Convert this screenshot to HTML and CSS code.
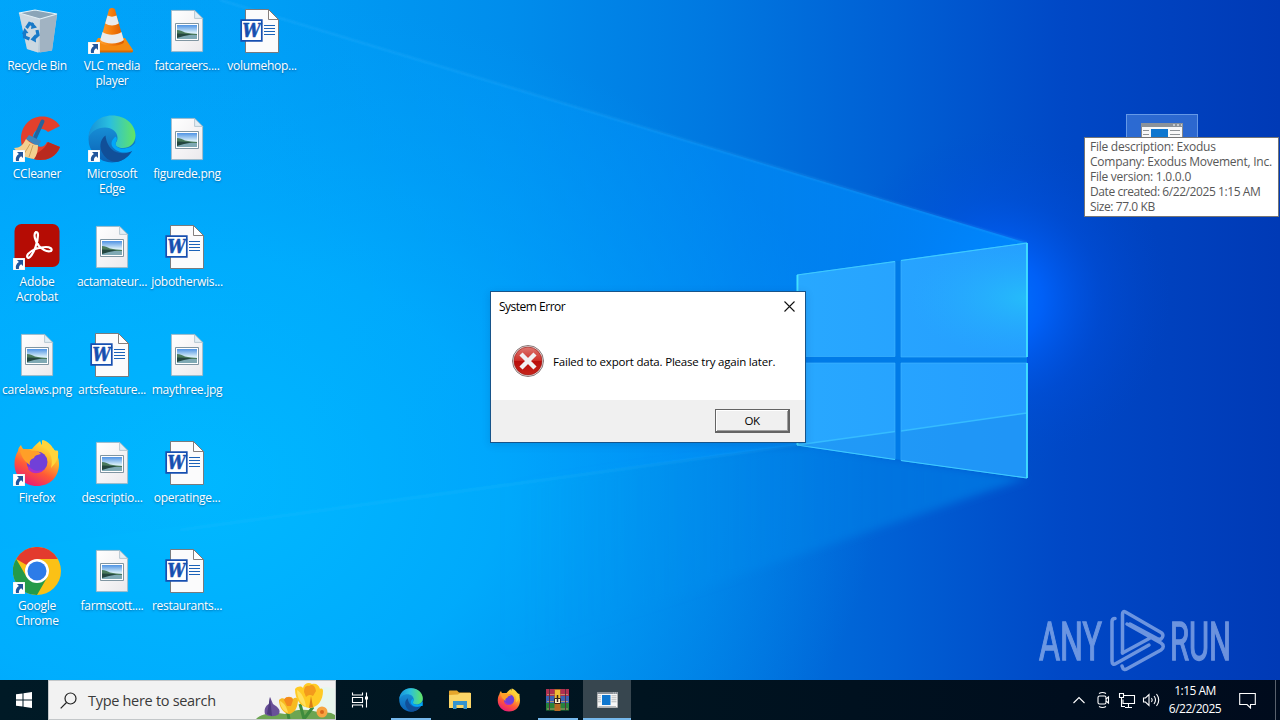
FILE: index.html
```html
<!DOCTYPE html>
<html lang="en">
<head>
    <meta charset="UTF-8">
    <meta name="viewport" content="width=device-width, initial-scale=1.0">
    <title>Desktop</title>
    <link rel="stylesheet" href="styles.css">
</head>
<body>
    <!-- Icons used more than once -->
    <svg class="defs" width="0" height="0" aria-hidden="true">
        <defs>
            <linearGradient id="sky" x1="0" y1="0" x2="0" y2="1">
                <stop offset="0" stop-color="#4f93e4"/>
                <stop offset=".55" stop-color="#d8eef8"/>
                <stop offset="1" stop-color="#a8ccd8"/>
            </linearGradient>
            <linearGradient id="paper" x1="0" y1="0" x2="1" y2="1">
                <stop offset="0" stop-color="#fff"/>
                <stop offset="1" stop-color="#ebe9ec"/>
            </linearGradient>
            <linearGradient id="edgeTop" x1="0" y1="0" x2="1" y2="0">
                <stop offset="0" stop-color="#1691d8"/>
                <stop offset=".45" stop-color="#2abfdf"/>
                <stop offset="1" stop-color="#62e563"/>
            </linearGradient>
            <linearGradient id="edgeLeft" x1="0" y1="0" x2="0" y2="1">
                <stop offset="0" stop-color="#1b9de0"/>
                <stop offset="1" stop-color="#0b60b4"/>
            </linearGradient>
            <linearGradient id="fire" x1=".8" y1="0" x2=".3" y2="1">
                <stop offset="0" stop-color="#fff04a"/>
                <stop offset=".35" stop-color="#ffb52a"/>
                <stop offset=".65" stop-color="#ff5a36"/>
                <stop offset="1" stop-color="#e8187a"/>
            </linearGradient>
            <linearGradient id="cone" x1="0" y1="0" x2="1" y2="0">
                <stop offset="0" stop-color="#ffa02e"/>
                <stop offset=".5" stop-color="#f57c0a"/>
                <stop offset="1" stop-color="#d85800"/>
            </linearGradient>
        </defs>
        <symbol id="shortcut" viewBox="0 0 12 12">
            <path fill="#fff" stroke="#c9d4dc" stroke-width=".5" d="M0 0h12v12H0z"/>
            <path fill="#23569c" d="M4 2h6v6L8.200 6.300C6.500 7.300 5.800 8.600 5.900 11H3C2.300 8 3.400 5.600 5.900 4.100z"/>
        </symbol>
        <symbol id="image" viewBox="0 0 48 48">
            <path fill="url(#paper)" stroke="#a9b5bd" stroke-width=".8" d="M8.400 3.400h23.200l8 8v33.200H8.400z"/>
            <path fill="#e2eef5" stroke="#a9bcc8" stroke-width=".8" d="M31.600 3.400v8h8z"/>
            <path fill="#fff" stroke="#7f95a2" d="M12.500 16.500h23v17h-23z"/>
            <path fill="url(#sky)" d="M14 18h20v14H14z"/>
            <path fill="#4a7a5c" d="M14 23c3 0 5 1 8 2.500 4 1 8 1 12 1.500v1H14z"/>
            <path fill="#7fa9b4" d="M14 28h20v4H14z"/>
            <path fill="#23463f" d="M14 26.500c5 0 10 .500 15 1l-8 1.500-7 2z"/>
        </symbol>
        <symbol id="word" viewBox="0 0 48 48">
            <path fill="#fbfbfc" stroke="#77716f" stroke-width=".9" d="M7.500 2.500h23l10 10v33h-33z"/>
            <path fill="#fff" stroke="#77716f" stroke-width=".9" d="M30.500 2.500v10h10z"/>
            <path stroke="#1b62b8" stroke-width="1" d="M26 18.500h11M26 21.500h11M26 24.500h11M26 27.500h11"/>
            <path fill="#fff" stroke="#174fb0" stroke-width="1.700" d="M3.200 13.200h20.600v20.600H3.200z"/>
        </symbol>
        <symbol id="edge" viewBox="0 0 48 48">
            <circle cx="24" cy="24" r="23.500" fill="url(#edgeLeft)"/>
            <path fill="url(#edgeTop)" d="M.5 23C1 9.500 11 .5 24 .5c14 0 23.500 9.500 23.500 20 0 8-6 12.500-12.500 12.500-5 0-7.500-2-7.500-4 0-1.500 2-2.500 2-6C29.500 17 24 12.500 17 12.500 9 12.500 2.500 17 .5 23z"/>
            <path fill="#114f98" d="M17.500 20.500C11.500 25 11 33 15 39c3.500 5.500 9.500 8.500 15 7.700 6.500-1.700 11-5.700 14-10.700-7 3.500-15 3-20-1.500-4-3.500-6-9-6.500-14z"/>
            <path fill="#01a7fa" class="edge-cut" d="M27.500 29c.5 3 4 5 9 4.500 5-.5 8.500-2.500 11-6v8c-1.500.300-2.500.500-3.500.500-8 3.500-16 1-20-5-1.500-4.500 1-7 3.500-9.500 3 3 0 5 0 7.500z"/>
        </symbol>
        <symbol id="firefox" viewBox="0 0 48 48">
            <path fill="url(#fire)" d="M5 12c0-3 2-5 3-6 1 3 2 4 4 5 2-1 5-1 7-1 2-3 5-5 8-8 1 2 1 3 2 4V1c5 3 7 6 9 10 1 0 2-1 2-2 4 5 6 10 6 16 0 13-9 22-22 22S1.500 37 1.500 25c0-5 1-9 3.500-13z"/>
            <circle cx="24" cy="23" r="10.500" fill="#7140d8"/>
            <path fill="#ff9f28" d="M7 12c4-3 9-2 12 0 3-1 7 0 9 3-4 1-6 1-7 4-3 1-5 3-4 7-5-3-8-7-10-14z"/>
            <path fill="#b02fc8" d="M16 27c3 5 10 6 15 3-2 5-12 6-16 0z"/>
            <path fill="#ffd43b" d="M29 6c7 5 12 12 9 23 5-5 8-10 7-17-1-1-3 0-4-1-2-4-5-8-11-10z"/>
        </symbol>
        <symbol id="app" viewBox="0 0 42 32">
            <path fill="#f8f8f8" stroke="#888" d="M.5.5h41v31H.5z"/>
            <path fill="#8b9299" d="M0 0h42v4H0z"/>
            <path stroke="#fff" d="M32 2h2m2 0h2m2 0h1"/>
            <path fill="#0f77cf" d="M10 6h17v20H10z"/>
            <path stroke="#8e9397" stroke-width="1.200" d="M2 7.500h6M2 11.500h6M2 15.500h6M2 19.500h6M29 7.500h10M29 11.500h10M29 15.500h10M29 19.500h10M3 29h35"/>
        </symbol>
    </svg>

    <main class="desktop">
        <svg class="wallpaper" viewBox="0 0 1280 680" preserveAspectRatio="none" aria-hidden="true">
            <defs>
                <linearGradient id="base" x1="0" y1="0" x2="1" y2="0">
                    <stop offset="0" stop-color="#00a5fa"/>
                    <stop offset=".2" stop-color="#009ff6"/>
                    <stop offset=".4" stop-color="#008dec"/>
                    <stop offset=".55" stop-color="#0079e1"/>
                    <stop offset=".7" stop-color="#005fd4"/>
                    <stop offset=".83" stop-color="#0048c6"/>
                    <stop offset="1" stop-color="#003ab6"/>
                </linearGradient>
                <radialGradient id="cyan" gradientUnits="userSpaceOnUse" cx="200" cy="480" r="680" gradientTransform="translate(0 130) scale(1 .73)">
                    <stop offset="0" stop-color="#00b9ff"/>
                    <stop offset=".45" stop-color="#00b0ff" stop-opacity=".8"/>
                    <stop offset="1" stop-color="#009cf8" stop-opacity="0"/>
                </radialGradient>
                <radialGradient id="glow" gradientUnits="userSpaceOnUse" cx="1000" cy="300" r="170">
                    <stop offset="0" stop-color="#0074ff"/>
                    <stop offset=".25" stop-color="#0064ff" stop-opacity=".85"/>
                    <stop offset=".6" stop-color="#0052e6" stop-opacity=".35"/>
                    <stop offset="1" stop-color="#0048d0" stop-opacity="0"/>
                </radialGradient>
                <linearGradient id="beam" gradientUnits="userSpaceOnUse" x1="300" y1="0" x2="1027" y2="0">
                    <stop offset="0" stop-color="#00a8ff" stop-opacity=".1"/>
                    <stop offset=".6" stop-color="#0092ff" stop-opacity=".5"/>
                    <stop offset="1" stop-color="#008eff" stop-opacity=".85"/>
                </linearGradient>
                <linearGradient id="lowbeam" gradientUnits="userSpaceOnUse" x1="500" y1="0" x2="1027" y2="0">
                    <stop offset="0" stop-color="#0098f0" stop-opacity="0"/>
                    <stop offset=".4" stop-color="#0090f0" stop-opacity=".25"/>
                    <stop offset="1" stop-color="#007ee6" stop-opacity=".75"/>
                </linearGradient>
                <linearGradient id="pane" gradientUnits="userSpaceOnUse" x1="797" y1="0" x2="1027" y2="0">
                    <stop offset="0" stop-color="#28a8ff"/>
                    <stop offset="1" stop-color="#259eff"/>
                </linearGradient>
                <radialGradient id="shine" gradientUnits="userSpaceOnUse" cx="1027" cy="298" r="120" gradientTransform="translate(0 149) scale(1 .5)">
                    <stop offset="0" stop-color="#25c8f8" stop-opacity=".7"/>
                    <stop offset="1" stop-color="#25b0ff" stop-opacity="0"/>
                </radialGradient>
                <filter id="soft"><feGaussianBlur stdDeviation="1"/></filter>
                <filter id="softer"><feGaussianBlur stdDeviation="4"/></filter>
            </defs>
            <path fill="url(#base)" d="M0 0h1280v680H0z"/>
            <path fill="url(#cyan)" d="M0 0h1280v680H0z"/>
            <path fill="url(#glow)" d="M800 100h480v420H800z"/>
            <path fill="url(#beam)" d="M1027 243 220 0H0v550l797-105z"/>
            <path fill="url(#lowbeam)" filter="url(#softer)" d="M797 445 400 500v190l627-212z"/>
            <path fill="none" stroke="#35b5ff" stroke-opacity=".3" stroke-width="2" filter="url(#soft)" d="M220 0l807 243"/>
            <path fill="none" stroke="#35c0ff" stroke-opacity=".2" stroke-width="2" filter="url(#soft)" d="M797 445 180 530"/>
            <path fill="#007be8" d="M797 275l230-32v235l-230-33z"/>
            <path fill="url(#pane)" stroke="#43b9ff" stroke-opacity=".6" d="M797 275l98-13.500v95H797zM901 260.500 1027 243v114H901zM797 363h98v96.500L797 445zM901 363h126v115l-126-17.500z"/>
            <path fill="url(#shine)" d="M901 260.500 1027 243v114H901z"/>
            <path fill="#1688ec" fill-opacity=".4" d="M797 445l98-13.500v28zM901 431l126-18v65l-126-17.500z"/>
            <path stroke="#36bcff" stroke-width="1.500" d="M797 445l98-13.500m6-.5 126-18"/>
            <path fill="none" stroke="#3dcbff" stroke-width="1.200" d="M797 275l98-13.500m6-1L1027 243M797 445l98 14.500m6 1 126 17.500"/>
            <path fill="none" stroke="#42e2ff" stroke-width="1.800" d="M797.500 275v82m0 6v82M1027 478V363m0-6V243"/>
        </svg>

        <div class="icons">
            <figure class="item">
                <svg viewBox="0 0 48 48">
                    <path fill="#b9cbd8" d="M6 6l8 36 11 3.500 14-2L44 8 24 4z"/>
                    <path fill="#a1b3c2" d="M27 12l17-5-5 36.500-12 2z"/>
                    <path fill="#8aa5b8" stroke="#e4f2f8" stroke-width="1.200" d="M6 6l16-3 22 4-17 5z"/>
                    <path fill="#dbe4ea" fill-opacity=".55" d="M6 6l21 6-2 33.500-11-3.500z"/>
                    <path fill="none" stroke="#1779c8" stroke-width="3.200" d="M13.500 21l3-4.500 4 1.500M24 23l1 5-3.500 3M16.500 32l-5-2 0-5"/>
                    <path fill="#1779c8" d="M19 15l5 5.500-6 1.500zM22.500 27l-5 5.500 5.500 3zM9 27l2.500-6 4 5z"/>
                </svg>
                <figcaption>Recycle Bin</figcaption>
            </figure>
            <figure class="item">
                <svg viewBox="0 0 48 48">
                    <path fill="#f58a10" d="M10 31h27l8 12c0 2-1 2-2 2H5c-2 0-2-1-2-2z"/>
                    <path fill="#d96a00" d="M3 43.500h42c0 2-1 2-2 2H5c-2 0-2 0-2-2z"/>
                    <path fill="url(#cone)" d="M21 2.500c1-2 5-2 6 0l9 32.500c-3 5-21 5-24 0z"/>
                    <path fill="#e9ebec" d="M19.500 8.500c3 1.500 6 1.500 9 0l2.300 8c-4 2.500-9.600 2.500-13.600 0zM14.500 25c5 3.500 14 3.500 19 0l2.300 8c-5 4.500-18.600 4.500-23.600 0z"/>
                    <use href="#shortcut" x="0" y="35" width="12" height="12"/>
                </svg>
                <figcaption>VLC media player</figcaption>
            </figure>
            <figure class="item"><svg viewBox="0 0 48 48"><use href="#image"/></svg><figcaption>fatcareers....</figcaption></figure>
            <figure class="item"><svg viewBox="0 0 48 48"><use href="#word"/><text x="4.500" y="30" textLength="18" lengthAdjust="spacingAndGlyphs">W</text></svg><figcaption>volumehop...</figcaption></figure>

            <figure class="item">
                <svg viewBox="0 0 48 48">
                    <path fill="#e2402c" d="M47 11C42 4 36 1.500 29 1.500 17 1.500 8 11 8 24c0 12 8 21 19 21 8 0 16-3 20-13l-13-5c-2 5-7 6-11 3-5-4-4-12 1-15 4-2 8-1 11 2z"/>
                    <path fill="#b92a1f" d="M47 32c-4 10-12 13-20 13-6 0-11-3-14-6 8 2 17-2 22-12z"/>
                    <path stroke="#26639b" stroke-width="4" stroke-linecap="round" d="M29.500 6.500 21 25"/>
                    <path fill="#3f86bd" d="M16 20l12 6-3 6-12-8z"/>
                    <path fill="#f3cf8f" d="M13 24c4 4 8 6 12 6 0 6-1 10-4 14-8-1-15-4-20-11 6 0 9-3 12-9z"/>
                    <path stroke="#cda05b" d="M17 29l-6 10m9-9-4 12"/>
                    <use href="#shortcut" x="0" y="35" width="12" height="12"/>
                </svg>
                <figcaption>CCleaner</figcaption>
            </figure>
            <figure class="item">
                <svg viewBox="0 0 48 48"><use href="#edge"/><use href="#shortcut" x="0" y="35" width="12" height="12"/></svg>
                <figcaption>Microsoft Edge</figcaption>
            </figure>
            <figure class="item"><svg viewBox="0 0 48 48"><use href="#image"/></svg><figcaption>figurede.png</figcaption></figure>
            <span></span>

            <figure class="item">
                <svg viewBox="0 0 48 48">
                    <rect x="1.500" y="1" width="45" height="43" rx="7" fill="#b50c04"/>
                    <path fill="none" stroke="#fff" stroke-width="2.200" stroke-linejoin="round" d="M23 9c-3 2-1 9 3 14 4 4 9 6 12 5 2-2-1-4-5-4-7 0-14 3-18 7-2 3 0 5 2 3 4-4 8-15 8-22 0-2-1-3-2-3z"/>
                    <use href="#shortcut" x="0" y="35" width="12" height="12"/>
                </svg>
                <figcaption>Adobe Acrobat</figcaption>
            </figure>
            <figure class="item"><svg viewBox="0 0 48 48"><use href="#image"/></svg><figcaption>actamateur...</figcaption></figure>
            <figure class="item"><svg viewBox="0 0 48 48"><use href="#word"/><text x="4.500" y="30" textLength="18" lengthAdjust="spacingAndGlyphs">W</text></svg><figcaption>jobotherwis...</figcaption></figure>
            <span></span>

            <figure class="item"><svg viewBox="0 0 48 48"><use href="#image"/></svg><figcaption>carelaws.png</figcaption></figure>
            <figure class="item"><svg viewBox="0 0 48 48"><use href="#word"/><text x="4.500" y="30" textLength="18" lengthAdjust="spacingAndGlyphs">W</text></svg><figcaption>artsfeature...</figcaption></figure>
            <figure class="item"><svg viewBox="0 0 48 48"><use href="#image"/></svg><figcaption>maythree.jpg</figcaption></figure>
            <span></span>

            <figure class="item">
                <svg viewBox="0 0 48 48"><use href="#firefox"/><use href="#shortcut" x="0" y="35" width="12" height="12"/></svg>
                <figcaption>Firefox</figcaption>
            </figure>
            <figure class="item"><svg viewBox="0 0 48 48"><use href="#image"/></svg><figcaption>descriptio...</figcaption></figure>
            <figure class="item"><svg viewBox="0 0 48 48"><use href="#word"/><text x="4.500" y="30" textLength="18" lengthAdjust="spacingAndGlyphs">W</text></svg><figcaption>operatinge...</figcaption></figure>
            <span></span>

            <figure class="item">
                <svg viewBox="0 0 48 48">
                    <circle cx="24" cy="24" r="24" fill="#fbc116"/>
                    <path fill="#e33b2e" d="M24 24 3.200 12A24 24 0 0 1 44.800 12H24z"/>
                    <path fill="#249a49" d="M3.200 12A24 24 0 0 0 24 48l10.400-18L24 24l-10.400 6z"/>
                    <circle cx="24" cy="24" r="12" fill="#fff"/>
                    <circle cx="24" cy="24" r="9.500" fill="#2d7ce8"/>
                    <use href="#shortcut" x="0" y="35" width="12" height="12"/>
                </svg>
                <figcaption>Google Chrome</figcaption>
            </figure>
            <figure class="item"><svg viewBox="0 0 48 48"><use href="#image"/></svg><figcaption>farmscott....</figcaption></figure>
            <figure class="item"><svg viewBox="0 0 48 48"><use href="#word"/><text x="4.500" y="30" textLength="18" lengthAdjust="spacingAndGlyphs">W</text></svg><figcaption>restaurants...</figcaption></figure>
            <span></span>
        </div>

        <div class="hovered">
            <svg width="42" height="32" viewBox="0 0 42 32"><use href="#app"/></svg>
        </div>
        <div class="tooltip">
            File description: Exodus<br>
            Company: Exodus Movement, Inc.<br>
            File version: 1.0.0.0<br>
            <span class="date">Date created: 6/22/2025 1:15 AM</span><br>
            <span class="date">Size: 77.0 KB</span>
        </div>

        <section class="dialog">
            <header class="dialog-title">
                <span>System Error</span>
                <svg width="11" height="11" viewBox="0 0 11 11"><path stroke="#111" stroke-width="1.100" d="M.5.5l10 10m0-10-10 10"/></svg>
            </header>
            <div class="dialog-body">
                <svg width="32" height="32" viewBox="0 0 32 32">
                    <defs>
                        <linearGradient id="red" x1="0" y1="0" x2="0" y2="1">
                            <stop offset="0" stop-color="#dd7770"/>
                            <stop offset=".48" stop-color="#cf3029"/>
                            <stop offset=".5" stop-color="#b90c0a"/>
                            <stop offset="1" stop-color="#c6251b"/>
                        </linearGradient>
                    </defs>
                    <circle cx="16" cy="16" r="15.500" fill="#e9e4e4" stroke="#8a7777"/>
                    <circle cx="16" cy="16" r="14" fill="url(#red)" stroke="#991b17" stroke-width=".6"/>
                    <path stroke="#f1f1f3" stroke-width="4.400" d="M9 9l14 14m0-14L9 23"/>
                </svg>
                <p>Failed to export data. Please try again later.</p>
            </div>
            <footer class="dialog-foot">
                <button type="button">OK</button>
            </footer>
        </section>

        <svg class="watermark" width="245" height="76" viewBox="0 0 245 76">
            <text x="4" y="56" textLength="63" lengthAdjust="spacingAndGlyphs">ANY</text>
            <text x="135" y="56" textLength="61" lengthAdjust="spacingAndGlyphs">RUN</text>
            <g fill="none" stroke-width="3.500" stroke-linejoin="round" stroke-linecap="round">
                <path d="M80 14.500c-2 0-3 1-3 3V57c0 3 1.500 4 4 2.500L114 41"/>
                <path d="M87.500 49V10c0-2 1-3 3-2L126 28.500c3 2 2 5 0 6.500-2 .5-3 0-4-.500L95 20"/>
                <path d="M87 62c1 4 3 4 5.500 2.500L126 46c3-2 3-5 0-7L92 20M87.500 49 116 33.500"/>
            </g>
        </svg>
    </main>

    <nav class="taskbar">
        <div class="start">
            <svg width="16" height="16" viewBox="0 0 16 16"><path fill="#fff" d="M0 2.300 6.500 1.400v6.100H0zM7.500 1.200 16 0v7.500H7.500zM0 8.500h6.500v6.100L0 13.700zM7.500 8.500H16V16l-8.500-1.200z"/></svg>
        </div>
        <div class="search">
            <svg class="lens" width="17" height="17" viewBox="0 0 17 17"><circle cx="10.500" cy="6.500" r="5.500"/><path d="M6.500 10.500.7 16.300"/></svg>
            <span>Type here to search</span>
            <svg class="flowers" width="80" height="38" viewBox="0 0 80 38">
                <path fill="#e8f6ee" d="M34 33C43 12 66 2 80 8v30H30z"/>
                <path fill="#6da552" d="M1 38c6-6 18-7 29-5 11-6 25-5 36-1 6-1 10-1 14 2v4z"/>
                <path stroke="#3f8b3d" stroke-width="3" fill="none" d="M34 38l-2-10m17 10-4-15m4 15 9-12"/>
                <path fill="#695098" d="M15 16l3 7c5 3 8 6 6 10-4 3-10 3-14 0-1-4 0-8 4-10z"/>
                <path fill="#4d397c" d="M15 16l2 19-5-2z"/>
                <path fill="#f7ba20" d="M24 19c2-2 4-2 6-1 1-3 7-3 8 0 2-2 4-1 5 0 0 8-3 14-9 15-6-1-10-7-10-14z"/>
                <path fill="#f4881e" d="M29 19c1-4 8-4 9 0l-2 6h-4z"/>
                <path fill="#ffdc58" d="M25 20c4 2 7 6 8 12-5-2-8-7-8-12z"/>
                <path fill="#ffca24" d="M40 8c3-3 6-3 8-1 1-5 6-6 9-4 4-1 7 1 8 5 2-1 3 0 3 2 0 9-5 17-14 17-8-1-14-8-14-19z"/>
                <path fill="#f39a1c" d="M49 11c0-5 2-7 5-6 3-2 6-1 7 5l-3 5c-3-2-5-1-7 1z"/>
                <path fill="#ffe05e" d="M42 9c5 3 8 9 9 17-6-4-9-10-9-17z"/>
                <path fill="#d97c15" d="M56 15l2 11-4 1z"/>
                <circle cx="67" cy="31" r="5.500" fill="#f7a440"/><circle cx="67" cy="31" r="2" fill="#d86618"/>
            </svg>
        </div>
        <div class="task">
            <svg class="line" width="18" height="16" viewBox="0 0 18 16"><path d="M1.500.5v2.500h10V.5M1.500 15.500V13h10v2.500M1.500 5.500h10v5h-10zM15.500.5v15"/><path class="dot" d="M14 4.500h3v3h-3z"/></svg>
        </div>
        <div class="task open">
            <svg width="24" height="24" viewBox="0 0 48 48"><use href="#edge"/></svg>
        </div>
        <div class="task">
            <svg width="22" height="20" viewBox="0 0 22 20"><path fill="#e5a52c" d="M0 1.500C0 .8.500.5 1 .5h7l2 2h11l1 1V18H0z"/><path fill="#fbd567" d="M0 5l9-.5L11 3h11v15H0z"/><path fill="#3593cf" d="M4 11h14v8h-3.500v-4h-7v4H4z"/></svg>
        </div>
        <div class="task">
            <svg width="24" height="24" viewBox="0 0 48 48"><use href="#firefox"/></svg>
        </div>
        <div class="task open">
            <svg width="25" height="22" viewBox="0 0 25 22">
                <path fill="#b03050" d="M1 0h23v7H1z"/><path fill="#3a62b4" d="M1 7h23v7H1z"/><path fill="#28823a" d="M1 14h23v7.500H1z"/>
                <path stroke="#c9a070" stroke-width=".8" d="M2 5.500h21M2 12.500h21M2 20h21"/>
                <path stroke="#5a2c3e" d="M4.500 0v21M20.500 0v21"/>
                <path fill="#b66a25" d="M9.500 0h6v22h-6z"/><path fill="#f1bd34" d="M10 1h5v8h-5z"/>
                <path fill="#fff5cf" stroke="#36231a" d="M9.500 9.500h6v5h-6z"/><path stroke="#36231a" stroke-width="1.500" d="M12.500 6v7"/>
            </svg>
        </div>
        <div class="task open active">
            <svg width="21" height="16" viewBox="0 0 42 32"><use href="#app"/></svg>
        </div>

        <div class="tray">
            <svg class="line" width="24" height="20" viewBox="0 0 24 20"><path d="M6.500 13l5.500-5.500 5.500 5.500"/></svg>
            <svg class="line" width="24" height="20" viewBox="0 0 24 20"><path d="M8 3.500q3.500-2 7 0M8 16.500q3.500 2 7 0"/><rect x="7" y="6" width="8" height="8" rx="1.500"/><path d="M15 9l2.500-2v6L15 11"/></svg>
            <svg class="line" width="24" height="20" viewBox="0 0 24 20"><path d="M9 5.500h10.500v8H8v-4M13.500 14v3M10 17.500h7M4.500 3.500h4v4h-4zM6.500 7.500v9h3.500"/></svg>
            <svg class="line" width="24" height="20" viewBox="0 0 24 20"><path d="M4.500 8h2l3.500-3.500v11L6.500 12h-2zM12.500 8q1.500 2 0 4M15 6q3 4 0 8M17.500 4q4.500 6 0 12"/></svg>
            <div class="clock">1:15 AM<br>6/22/2025</div>
            <svg class="line notice" width="17" height="17" viewBox="0 0 17 17"><path d="M.7 1.500h15.600v11h-4.800v3.500L8 12.500H.7z"/></svg>
        </div>
        <div class="peek"></div>
    </nav>
</body>
</html>
```
FILE: styles.css
```css
* {
    box-sizing: border-box;
}

body {
    margin: 0;
    width: 1280px;
    height: 720px;
    overflow: hidden;
    font-family: "Open Sans", "Noto Sans", sans-serif;
    font-size: 12px;
    display: flex;
    flex-direction: column;
}

.defs {
    position: absolute;
}

.desktop {
    position: relative;
    height: 680px;
    background-color: #0080e5;
}

.wallpaper {
    position: absolute;
    width: 1280px;
    height: 680px;
}

/* desktop shortcuts */
.icons {
    position: relative;
    width: 300px;
    display: grid;
    grid-template-columns: repeat(4, 75px);
    grid-auto-rows: 108px;
}

.item {
    margin: 0;
    padding: 7px 0 0 0;
    width: 74px;
    display: flex;
    flex-direction: column;
    align-items: center;
}

.item svg {
    width: 48px;
    height: 48px;
    flex: none;
}

.item figcaption {
    margin-top: 3px;
    line-height: 15px;
    letter-spacing: -0.28px;
    color: white;
    text-align: center;
    text-shadow: 0 1px 2px rgba(0, 40, 90, 0.5);
}

.item text {
    font: italic bold 18px "DejaVu Serif", serif;
    fill: #174fb0;
    stroke: #174fb0;
    stroke-width: 0.5px;
}

/* file under the pointer */
.hovered {
    position: absolute;
    left: 1126px;
    top: 114px;
    width: 72px;
    height: 84px;
    padding-top: 8px;
    text-align: center;
    background-color: rgba(110, 165, 235, 0.4);
    border: 1px solid rgba(140, 185, 245, 0.6);
}

.tooltip {
    position: absolute;
    left: 1084px;
    top: 137px;
    width: 195px;
    height: 80px;
    padding: 1px 0 0 5px;
    line-height: 15px;
    letter-spacing: -0.25px;
    white-space: nowrap;
    color: #575757;
    background-color: white;
    border: 1px solid #767676;
}

.date {
    letter-spacing: -0.42px;
}

/* error window */
.dialog {
    position: absolute;
    left: 490px;
    top: 291px;
    width: 316px;
    height: 152px;
    display: flex;
    flex-direction: column;
    color: black;
    background-color: white;
    border: 1px solid #17548a;
    box-shadow: 0 2px 8px rgba(0, 30, 80, 0.15);
}

.dialog-title {
    height: 28px;
    margin-bottom: 2px;
    padding: 0 10px 0 8px;
    display: flex;
    justify-content: space-between;
    align-items: center;
    letter-spacing: -0.5px;
}

.dialog-body {
    height: 78px;
    padding: 0 0 1px 21px;
    display: flex;
    align-items: center;
    gap: 9px;
}

.dialog-body p {
    margin: 2px 0 0 0;
    font-size: 11.5px;
    letter-spacing: -0.2px;
    white-space: nowrap;
}

.dialog-foot {
    flex: 1;
    padding: 9px 15px;
    display: flex;
    justify-content: flex-end;
    background-color: #f0f0f0;
}

.dialog-foot button {
    width: 75px;
    height: 24px;
    padding: 0;
    font: 11.5px "Open Sans", sans-serif;
    letter-spacing: -0.5px;
    color: black;
    background-color: #f0f0f0;
    border: 1px solid #646464;
    border-right: 2px solid #646464;
    border-bottom: 2px solid #646464;
    box-shadow: inset 1px 1px white, inset -1px -1px #a0a0a0;
}

.watermark {
    position: absolute;
    left: 1035px;
    top: 604px;
    opacity: 0.6;
    fill: #b4cbf5;
    stroke: #b4cbf5;
}

.watermark text {
    font: 400 53px Roboto, sans-serif;
    stroke-width: 1.4px;
}

/* taskbar */
.taskbar {
    height: 40px;
    display: flex;
    background: linear-gradient(to right, #001a26, #001420 50%, #000b1d);
}

.start {
    width: 48px;
    display: flex;
    align-items: center;
    justify-content: center;
}

.search {
    width: 288px;
    display: flex;
    align-items: center;
    padding-left: 11px;
    color: #3a3a3a;
    background-color: #f2f2f2;
    border: 1px solid #c3c7c9;
}

.search span {
    width: 157px;
    margin-left: 11px;
    margin-top: 1px;
    font-size: 14.5px;
    letter-spacing: -0.3px;
    white-space: nowrap;
}

.lens {
    fill: none;
    stroke: #222;
    stroke-width: 1.2;
}

.flowers {
    flex: none;
    margin-left: 10px;
}

.task {
    position: relative;
    width: 49px;
    display: flex;
    align-items: center;
    justify-content: center;
}

.task:nth-child(3) {
    width: 50px;
    padding-right: 2px;
}

.task.open::after {
    content: "";
    position: absolute;
    left: 5px;
    right: 4px;
    bottom: 0;
    height: 2px;
    background-color: #76b9ed;
}

.task.active {
    width: 48px;
    margin-left: 1px;
    background-color: #37464f;
}

.task.active::after {
    left: 0;
    right: 0;
}

.task .edge-cut {
    fill: #001722;
}

.line {
    fill: none;
    stroke: white;
    stroke-width: 1.1;
}

.line .dot {
    fill: white;
    stroke: none;
}

.tray {
    margin-left: auto;
    display: flex;
    align-items: center;
    color: white;
}

.clock {
    width: 64px;
    line-height: 18px;
    letter-spacing: -0.5px;
    text-align: center;
}

.notice {
    margin: 0 19px 0 12px;
}

.peek {
    width: 5px;
    border-left: 1px solid #59616d;
}
```
